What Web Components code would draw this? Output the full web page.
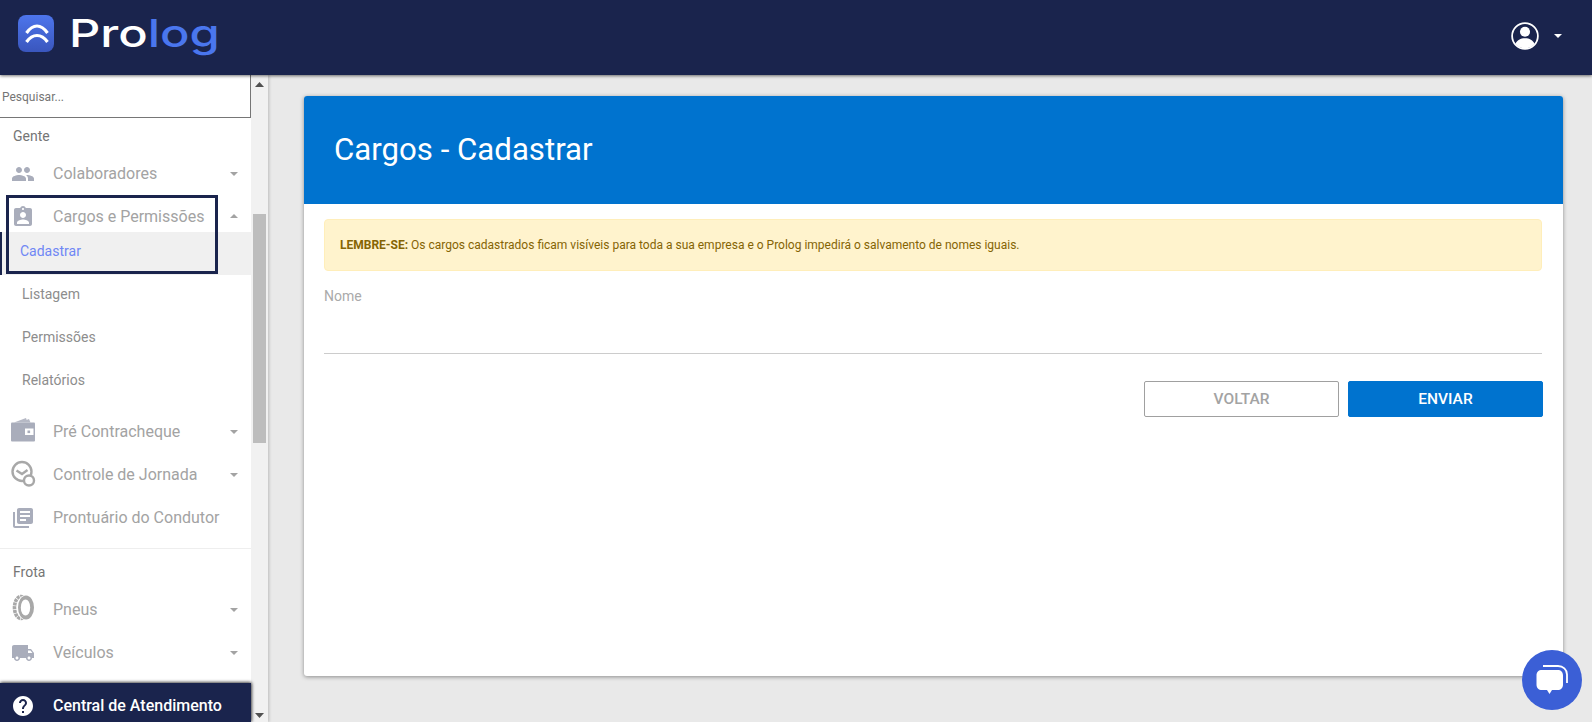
<!DOCTYPE html>
<html lang="pt-BR">
<head>
<meta charset="utf-8">
<title>Prolog</title>
<style>
  html, body { margin: 0; height: 100%; overflow: hidden; }
  body { font-family: Roboto, "Liberation Sans", sans-serif; background: #e9e9e9; }
</style>
</head>
<body>
<pl-app>
  <pl-header slot="header"></pl-header>
  <pl-sidebar slot="sidebar">
    <pl-section>Gente</pl-section>
    <pl-item icon="people" caret="down">Colaboradores</pl-item>
    <pl-item icon="badge" caret="up" open>Cargos e Permissões</pl-item>
    <pl-sub active>Cadastrar</pl-sub>
    <pl-sub>Listagem</pl-sub>
    <pl-sub>Permissões</pl-sub>
    <pl-sub last>Relatórios</pl-sub>
    <pl-item icon="wallet" caret="down">Pré Contracheque</pl-item>
    <pl-item icon="clock" caret="down">Controle de Jornada</pl-item>
    <pl-item icon="books">Prontuário do Condutor</pl-item>
    <pl-section divided>Frota</pl-section>
    <pl-item icon="tire" caret="down">Pneus</pl-item>
    <pl-item icon="truck" caret="down">Veículos</pl-item>
  </pl-sidebar>
  <pl-card slot="main" heading="Cargos - Cadastrar">
    <pl-alert><b>LEMBRE-SE:</b> Os cargos cadastrados ficam visíveis para toda a sua empresa e o Prolog impedirá o salvamento de nomes iguais.</pl-alert>
    <pl-field label="Nome"></pl-field>
    <pl-actions>
      <pl-button>VOLTAR</pl-button>
      <pl-button primary>ENVIAR</pl-button>
    </pl-actions>
  </pl-card>
  <pl-chat slot="main"></pl-chat>
</pl-app>

<script>
const ICONS = {
  people: '<path d="M16 11c1.66 0 2.99-1.34 2.99-3S17.66 5 16 5c-1.66 0-3 1.34-3 3s1.34 3 3 3zm-8 0c1.66 0 2.99-1.34 2.99-3S9.66 5 8 5C6.34 5 5 6.34 5 8s1.34 3 3 3zm0 2c-2.33 0-7 1.17-7 3.5V19h14v-2.5c0-2.33-4.67-3.5-7-3.5zm8 0c-.29 0-.62.02-.97.05 1.16.84 1.97 1.97 1.97 3.45V19h6v-2.5c0-2.33-4.67-3.5-7-3.5z"/>',
  badge: '<path d="M19 3h-4.18C14.4 1.84 13.3 1 12 1c-1.3 0-2.4.84-2.82 2H5c-1.1 0-2 .9-2 2v14c0 1.1.9 2 2 2h14c1.1 0 2-.9 2-2V5c0-1.1-.9-2-2-2zm-7 0c.55 0 1 .45 1 1s-.45 1-1 1-1-.45-1-1 .45-1 1-1zm0 4c1.66 0 3 1.34 3 3s-1.34 3-3 3-3-1.34-3-3 1.34-3 3-3zm6 12H6v-1.4c0-2 4-3.1 6-3.1s6 1.1 6 3.1V19z"/>',
  wallet: '<path d="M3 2.500 15 -2l1.500 4.500zM9 2.500 18 -1l1.500 3.500z" opacity=".85"/><rect y="2.500" width="24" height="19" rx="1"/><rect x="14" y="8.500" width="8.500" height="6.500" fill="#fff"/><rect x="16.500" y="10.500" width="2.600" height="2.600"/>',
  clock: '<g fill="none" stroke="#a8a8a8" stroke-width="2.400"><circle cx="11" cy="8.500" r="9.500"/><path d="M5.500 7.500l5.500 3.500 5.500-4"/><circle cx="18" cy="17.500" r="5" fill="#fff"/></g>',
  books: '<path d="M4 6H2v14c0 1.1.9 2 2 2h14v-2H4V6zm16-4H8c-1.1 0-2 .9-2 2v12c0 1.1.9 2 2 2h12c1.1 0 2-.9 2-2V4c0-1.1-.9-2-2-2zm-1 9H9V9h10v2zm-4 4H9v-2h6v2zm4-8H9V5h10v2z"/>',
  tire: '<ellipse cx="10" cy="9.500" rx="6.500" ry="11" fill="none" stroke="#a8a8a8" stroke-width="3.600" stroke-dasharray="3 .7"/><ellipse cx="14.600" cy="9.500" rx="8.800" ry="12.500" fill="#fff"/><ellipse cx="15" cy="9.500" rx="8" ry="12" fill="#a8a8a8"/><ellipse cx="14.500" cy="9.500" rx="4.700" ry="8" fill="#fff"/>',
  truck: '<path d="M20 8h-3V4H3c-1.1 0-2 .9-2 2v11h2c0 1.66 1.34 3 3 3s3-1.34 3-3h6c0 1.66 1.34 3 3 3s3-1.34 3-3h2v-5l-3-4zM6 18.500c-.83 0-1.500-.67-1.500-1.500s.67-1.500 1.500-1.500 1.500.67 1.500 1.500-.67 1.500-1.500 1.500zm13.500-9l1.960 2.500H17V9.500h2.500zm-1.500 9c-.83 0-1.500-.67-1.500-1.500s.67-1.500 1.500-1.500 1.500.67 1.500 1.500-.67 1.500-1.500 1.500z"/>',
  help: '<path d="M12 2C6.480 2 2 6.480 2 12s4.480 10 10 10 10-4.480 10-10S17.520 2 12 2zm1 17h-2v-2h2v2zm2.070-7.750l-.9.920C13.450 12.900 13 13.500 13 15h-2v-.5c0-1.100.45-2.100 1.170-2.830l1.240-1.260c.37-.36.59-.86.59-1.410 0-1.100-.9-2-2-2s-2 .9-2 2H8c0-2.210 1.790-4 4-4s4 1.790 4 4c0 .88-.36 1.680-.93 2.250z"/>'
};

// small helper, every element below is the same shape
function define(name, css, html) {
  customElements.define(name, class extends HTMLElement {
    constructor() {
      super();
      this.attachShadow({ mode: "open" });
    }
    connectedCallback() {
      const body = typeof html === "function" ? html(this) : html;
      this.shadowRoot.innerHTML = `<style>${css}</style>${body}`;
    }
  });
}

define("pl-app", `
  :host { display: grid; grid-template-columns: 268px 1fr; grid-template-rows: 75px 647px; height: 722px; }
  .top { grid-column: 1 / 3; position: relative; z-index: 3; }
  .side { min-height: 0; position: relative; z-index: 2; display: flex; }
  .main { min-width: 0; position: relative; }
`, `
  <div class="top"><slot name="header"></slot></div>
  <div class="side"><slot name="sidebar"></slot></div>
  <div class="main"><slot name="main"></slot></div>
`);

define("pl-header", `
  :host { display: flex; align-items: flex-start; justify-content: space-between; height: 75px; background: #1a244d; box-shadow: 0 1px 3px rgba(0,0,0,.55); }
  .brand { display: flex; align-items: flex-start; padding: 15px 0 0 18px; gap: 15px; }
  .word { font: 500 38px/40px Inter, "Liberation Sans", sans-serif; color: #fff; margin-top: -2px; height: 40px; transform: scaleX(1.285); transform-origin: left; }
  .word span { color: #4a76ee; }
  .user { display: flex; align-items: center; gap: 15px; padding: 22px 30px 0 0; }
  .user svg { display: block; }
`, `
  <div class="brand">
    <svg width="36" height="37" viewBox="0 0 36 37">
      <defs><linearGradient id="lg" x1="0" y1="0" x2="0" y2="1"><stop offset="0" stop-color="#4d75ec"/><stop offset="1" stop-color="#3a56bd"/></linearGradient></defs>
      <rect width="36" height="37" rx="8" fill="url(#lg)"/>
      <path d="M8.500 18C12 13 16 11 19 11s7 2 10.500 7M8.500 27C12 22 16 20.500 19 20.500s7 1.500 10.500 6.500" fill="none" stroke="#fff" stroke-width="3.200"/>
    </svg>
    <div class="word">Pro<span>log</span></div>
  </div>
  <div class="user">
    <svg width="28" height="28" viewBox="0 0 30 30">
      <circle cx="15" cy="15" r="13.800" fill="none" stroke="#fff" stroke-width="1.900"/>
      <circle cx="15" cy="10.500" r="5.400" fill="#fff"/>
      <path d="M4.800 23.500c1.500-4 5.500-6 10.200-6s8.700 2 10.200 6c-2.500 3-6 4.500-10.200 4.500s-7.700-1.500-10.200-4.500z" fill="#fff"/>
    </svg>
    <svg width="8" height="4" viewBox="0 0 8 4"><path d="M0 0h8L4 4z" fill="#fff"/></svg>
  </div>
`);

define("pl-sidebar", `
  :host { display: flex; width: 268px; height: 647px; background: #f1f1f1; box-shadow: 1px 0 3px rgba(0,0,0,.2); }
  .col { width: 251px; display: flex; flex-direction: column; height: 100%; background: #fff; position: relative; }
  .search { box-sizing: border-box; height: 43px; padding: 2px 0 0 2px; display: flex; align-items: center; font-size: 12px; color: #757575; border-right: 1px solid #767676; border-bottom: 1px solid #767676; background: #fff; }
  .nav { flex: 1; min-height: 0; overflow: hidden; }
  .foot { height: 39px; flex: none; background: #1a244d; color: #fff; display: flex; align-items: center; font-size: 16px; font-weight: 500; box-shadow: 0 -1px 3px rgba(0,0,0,.5), 1px 0 3px rgba(0,0,0,.5); position: relative; }
  .foot svg { width: 24px; height: 24px; fill: #fff; margin: 0 18px 0 11px; position: relative; top: 3px; }
  .foot span { position: relative; top: 3px; }
  .bar { width: 17px; display: flex; flex-direction: column; align-items: center; justify-content: space-between; }
  .bar svg { display: block; margin: 7px 0 4px; }
  .track { flex: 1; width: 100%; padding-top: 123px; box-sizing: border-box; }
  .thumb { width: 13px; height: 229px; margin-left: 2px; background: #bdbdbd; }
  .mark { position: absolute; left: 6px; top: 120px; width: 212px; height: 79px; box-sizing: border-box; border: 3px solid #1a244d; pointer-events: none; }
  .tick { position: absolute; left: 0; top: 157px; width: 2px; height: 43px; background: #1a244d; }
`, `
  <div class="col">
    <div class="search">Pesquisar...</div>
    <div class="nav"><slot></slot></div>
    <div class="foot"><svg viewBox="0 0 24 24">${ICONS.help}</svg><span>Central de Atendimento</span></div>
    <div class="tick"></div>
    <div class="mark"></div>
  </div>
  <div class="bar">
    <svg width="9" height="5" viewBox="0 0 9 5"><path d="M0 5h9L4.500 0z" fill="#505050"/></svg>
    <div class="track"><div class="thumb"></div></div>
    <svg width="9" height="5" viewBox="0 0 9 5"><path d="M0 0h9L4.500 5z" fill="#505050"/></svg>
  </div>
`);

define("pl-section", `
  :host { display: block; font-size: 14px; line-height: 19px; color: #757575; padding: 9px 0 6px 13px; }
  :host([divided]) { margin-top: 9px; border-top: 1px solid #eee; padding: 14px 0 6px 13px; }
`, `<slot></slot>`);

define("pl-item", `
  :host { display: flex; align-items: center; height: 43px; color: #a3a3a3; font-size: 16px; position: relative; }
  :host([open]) { height: 37px; align-items: flex-start; padding-top: 10px; box-sizing: border-box; line-height: 24px; }
  .ic { width: 24px; height: 24px; margin: 0 18px 0 11px; flex: none; fill: #a9adbb; overflow: visible; }
  .text { flex: 1; }
  .caret { margin-right: 13px; width: 8px; height: 4px; fill: #a3a3a3; flex: none; }
  :host([open]) .caret { margin-top: 9px; }
`, el => `
  <svg class="ic" viewBox="0 0 24 24">${ICONS[el.getAttribute("icon")]}</svg>
  <span class="text"><slot></slot></span>
  ${el.getAttribute("caret") ? `<svg class="caret" viewBox="0 0 9 5" preserveAspectRatio="none"><path d="${el.getAttribute("caret") === "up" ? "M0 5h9L4.500 0z" : "M0 0h9L4.500 5z"}"/></svg>` : ""}
`);

define("pl-sub", `
  :host { display: block; height: 43px; box-sizing: border-box; padding: 10px 0 0 22px; font-size: 14px; line-height: 19px; color: #8d8d8d; }
  :host([active]) { background: #f0f0f0; color: #6f87f5; padding-left: 20px; }
  :host([last]) { margin-bottom: 6px; }
`, `<slot></slot>`);

define("pl-card", `
  :host { display: block; margin: 21px 29px 0 36px; height: 580px; background: #fff; border-radius: 3px; box-shadow: 0 1px 4px rgba(0,0,0,.4); overflow: hidden; }
  h1 { margin: 0; height: 108px; box-sizing: border-box; padding: 0 0 2px 30px; display: flex; align-items: center; background: #0073cf; color: #fff; font-size: 31.200px; font-weight: 400; }
  .body { padding: 15px 20px 0; }
`, el => `
  <h1>${el.getAttribute("heading")}</h1>
  <div class="body"><slot></slot></div>
`);

define("pl-alert", `
  :host { display: block; box-sizing: border-box; height: 52px; padding: 0 15px; line-height: 50px; font-size: 12px; background: #fff3cd; border: 1px solid #ffeeba; border-radius: 4px; color: #856404; margin-right: 1px; }
`, `<slot></slot>`);

define("pl-field", `
  :host { display: block; height: 67px; margin-top: 15px; border-bottom: 1px solid #ccc; margin-right: 1px; font-size: 14px; line-height: 20px; color: #aaa; }
`, el => el.getAttribute("label"));

define("pl-actions", `
  :host { display: flex; justify-content: flex-end; gap: 9px; margin-top: 27px; }
`, `<slot></slot>`);

define("pl-button", `
  :host { display: flex; align-items: center; justify-content: center; box-sizing: border-box; width: 195px; height: 36px; border-radius: 2px; font-size: 15.500px; font-weight: 500; border: 1px solid #a0a0a0; color: #a3a3a3; background: #fff; }
  :host([primary]) { border-color: #0073cf; background: #0073cf; color: #fff; }
`, `<slot></slot>`);

define("pl-chat", `
  :host { position: fixed; left: 1522px; top: 650px; width: 60px; height: 60px; border-radius: 50%; background: #3b5fd6; display: block; }
  svg { display: block; }
`, `
  <svg width="60" height="60" viewBox="0 0 60 60" fill="#fff">
    <path d="M21 16h15c5 0 9 3.500 9 8.500V33" fill="none" stroke="#fff" stroke-width="1.800"/>
    <path d="M20 20h15.500c3.500 0 5.500 2 5.500 5.500v9c0 3.500-2 5.500-5.500 5.500H30l-2.500 4-2.500-4h-5c-3.500 0-5.500-2-5.500-5.500v-9c0-3.500 2-5.500 5.500-5.500z"/>
  </svg>
`);
</script>
</body>
</html>
